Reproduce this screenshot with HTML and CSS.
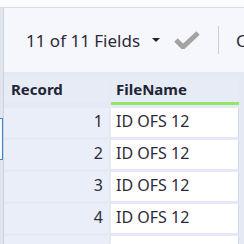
FILE: index.html
```html
<!DOCTYPE html>
<html lang="en">
<head>
  <meta charset="UTF-8">
  <title>Fields</title>
  <link rel="stylesheet" href="styles.css">
</head>
<body>
  <div class="top-strip"></div>
  <div class="main">
    <div class="rail">
      <div class="rail-select"></div>
    </div>
    <div class="content">
      <div class="toolbar">
        <span class="fields">11 of 11 Fields</span>
        <span class="caret"></span>
        <svg class="check" width="26" height="18" viewBox="0 0 26 18">
          <path d="M2 9 L9 16 L24 2" fill="none" stroke="#a3a3a3" stroke-width="5"/>
        </svg>
        <span class="sep"></span>
        <span class="more">C</span>
      </div>
      <div class="grid">
        <div class="hcell rec">Record</div>
        <div class="hcell name">FileName</div>
        <div class="rcell">1</div><div class="vcell">ID OFS 12</div>
        <div class="rcell">2</div><div class="vcell">ID OFS 12</div>
        <div class="rcell">3</div><div class="vcell">ID OFS 12</div>
        <div class="rcell">4</div><div class="vcell">ID OFS 12</div>
        <div class="rcell"></div><div class="vcell"></div>
      </div>
    </div>
  </div>
</body>
</html>
```
FILE: styles.css
```css
body {
  margin: 0;
  width: 244px;
  height: 244px;
  overflow: hidden;
  background: #e4e9f3;
  font-family: 'Noto Sans', 'Open Sans', sans-serif;
  color: #2b2b3a;
}
.top-strip {
  height: 7px;
  background: #fbfcfe;
  border-bottom: 1px solid #d6dbe4;
}
.main {
  display: flex;
  height: 236px;
  overflow: hidden;
}
.rail {
  flex-shrink: 0;
  width: 4px;
  background: #dfe5ef;
  border-right: 1px solid #cdd4df;
  padding-top: 110px;
  box-sizing: border-box;
}
.rail-select {
  height: 40px;
  border: 1px solid #3d86d4;
  border-left: none;
  background: #f7f9fd;
}
.content {
  flex: 1;
  min-width: 0;
}
.toolbar {
  height: 64px;
  background: #f5f7fc;
  display: flex;
  align-items: center;
  padding-left: 22px;
  font-size: 17px;
  white-space: nowrap;
  overflow: hidden;
}
.caret {
  flex-shrink: 0;
  width: 0;
  height: 0;
  border-left: 4px solid transparent;
  border-right: 4px solid transparent;
  border-top: 4px solid #222;
  margin-left: 12px;
}
.check {
  flex-shrink: 0;
  margin-left: 14px;
}
.sep {
  flex-shrink: 0;
  width: 1px;
  height: 28px;
  background: #c9ced6;
  margin-left: 18px;
}
.more {
  margin-left: 17px;
}
.grid {
  display: grid;
  grid-template-columns: 105px 128px;
  grid-auto-rows: 29px;
  gap: 3px 2px;
  padding-top: 4px;
  font-size: 16px;
}
.hcell {
  background: #e6ebf5;
  font-weight: bold;
  font-size: 15px;
  display: flex;
  align-items: center;
  height: 26px;
  color: #1f2535;
}
.hcell.rec {
  padding-left: 7px;
}
.hcell.name {
  padding-left: 5px;
  border-bottom: 3px solid #8ee86a;
}
.rcell {
  background: #e9eef8;
  text-align: right;
  padding-right: 6px;
  line-height: 26px;
}
.vcell {
  background: #fff;
  border-right: 1px solid #d3d9e4;
  padding-left: 5px;
  line-height: 26px;
}
```
